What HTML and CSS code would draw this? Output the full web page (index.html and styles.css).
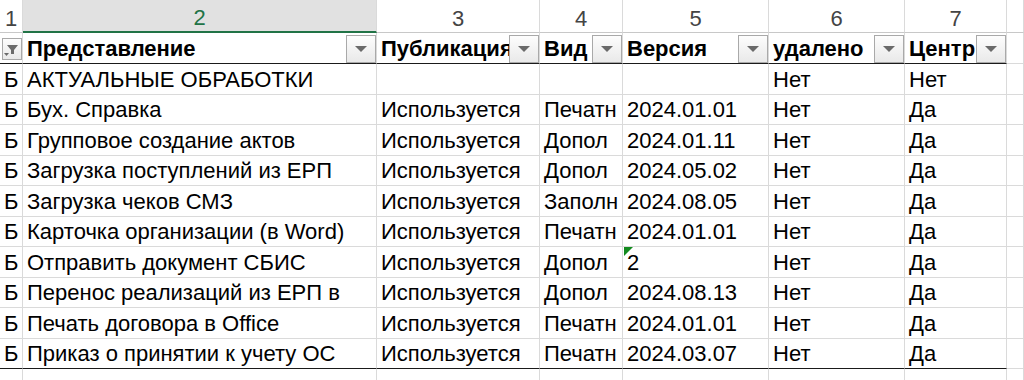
FILE: index.html
```html
<!DOCTYPE html>
<html lang="ru">
<head>
<meta charset="utf-8">
<title>Лист</title>
<link rel="stylesheet" href="styles.css">
</head>
<body>
<div class="sheet">
  <div class="ch">1</div>
  <div class="ch sel">2</div>
  <div class="ch">3</div>
  <div class="ch">4</div>
  <div class="ch">5</div>
  <div class="ch">6</div>
  <div class="ch">7</div>
  <div class="ch"></div>

  <div class="th first">
    <span class="fbtn active">
      <svg width="18" height="18" viewBox="0 0 18 18">
        <path d="M4 5 H15 L11 10 V14 H8 V10 Z" fill="#6b6b6b"/>
        <path d="M1 13 H6 L3.5 16 Z" fill="#6b6b6b"/>
      </svg>
    </span>
  </div>
  <div class="th"><span class="lbl">Представление</span><span class="fbtn"><i></i></span></div>
  <div class="th"><span class="lbl">Публикация</span><span class="fbtn"><i></i></span></div>
  <div class="th"><span class="lbl">Вид</span><span class="fbtn"><i></i></span></div>
  <div class="th"><span class="lbl">Версия</span><span class="fbtn"><i></i></span></div>
  <div class="th"><span class="lbl">удалено</span><span class="fbtn"><i></i></span></div>
  <div class="th"><span class="lbl">Центр</span><span class="fbtn"><i></i></span></div>
  <div class="c plain"></div>

  <div class="c">Б</div><div class="c">АКТУАЛЬНЫЕ ОБРАБОТКИ</div><div class="c"></div><div class="c"></div><div class="c"></div><div class="c">Нет</div><div class="c">Нет</div><div class="c plain"></div>
  <div class="c">Б</div><div class="c">Бух. Справка</div><div class="c">Используется</div><div class="c">Печатн</div><div class="c">2024.01.01</div><div class="c">Нет</div><div class="c">Да</div><div class="c plain"></div>
  <div class="c">Б</div><div class="c">Групповое создание актов</div><div class="c">Используется</div><div class="c">Допол</div><div class="c">2024.01.11</div><div class="c">Нет</div><div class="c">Да</div><div class="c plain"></div>
  <div class="c">Б</div><div class="c">Загрузка поступлений из ЕРП</div><div class="c">Используется</div><div class="c">Допол</div><div class="c">2024.05.02</div><div class="c">Нет</div><div class="c">Да</div><div class="c plain"></div>
  <div class="c">Б</div><div class="c">Загрузка чеков СМЗ</div><div class="c">Используется</div><div class="c">Заполн</div><div class="c">2024.08.05</div><div class="c">Нет</div><div class="c">Да</div><div class="c plain"></div>
  <div class="c">Б</div><div class="c">Карточка организации (в Word)</div><div class="c">Используется</div><div class="c">Печатн</div><div class="c">2024.01.01</div><div class="c">Нет</div><div class="c">Да</div><div class="c plain"></div>
  <div class="c">Б</div><div class="c">Отправить документ СБИС</div><div class="c">Используется</div><div class="c">Допол</div><div class="c err">2</div><div class="c">Нет</div><div class="c">Да</div><div class="c plain"></div>
  <div class="c">Б</div><div class="c">Перенос реализаций из ЕРП в</div><div class="c">Используется</div><div class="c">Допол</div><div class="c">2024.08.13</div><div class="c">Нет</div><div class="c">Да</div><div class="c plain"></div>
  <div class="c">Б</div><div class="c">Печать договора в Office</div><div class="c">Используется</div><div class="c">Печатн</div><div class="c">2024.01.01</div><div class="c">Нет</div><div class="c">Да</div><div class="c plain"></div>
  <div class="c last">Б</div><div class="c last">Приказ о принятии к учету ОС</div><div class="c last">Используется</div><div class="c last">Печатн</div><div class="c last">2024.03.07</div><div class="c last">Нет</div><div class="c last">Да</div><div class="c plain"></div>

  <div class="c"></div><div class="c"></div><div class="c"></div><div class="c"></div><div class="c"></div><div class="c"></div><div class="c"></div><div class="c plain"></div>
</div>
</body>
</html>
```

FILE: styles.css
```css
* { box-sizing: border-box; }
html, body { margin: 0; padding: 0; background: #fff; }
body {
  font-family: "Liberation Sans", Arial, sans-serif;
  font-size: 22px;
  color: #000;
  overflow: hidden;
}
.sheet {
  display: grid;
  grid-template-columns: 23px 354px 163px 83px 146px 136px 102px 17px;
  grid-template-rows: 33px 31px repeat(10, 30.5px) 30px;
  width: 1024px;
}
.ch {
  display: flex;
  align-items: flex-end;
  justify-content: center;
  padding-bottom: 0;
  font-size: 22px;
  color: #444;
  border-right: 1px solid #dadada;
  border-bottom: 1px solid #c8c8c8;
  background: #fff;
}
.ch.sel {
  background: #e1e1e1;
  color: #217346;
  border-bottom: 2px solid #217346;
}
.th {
  position: relative;
  display: flex;
  align-items: center;
  padding-left: 4px;
  padding-top: 1px;
  font-weight: bold;
  white-space: nowrap;
  overflow: hidden;
  border-right: 1px solid #dadada;
  border-bottom: 1.5px solid #1a1a1a;
}
.th.first { padding-left: 0; }
.fbtn {
  position: absolute;
  right: 0;
  top: 2px;
  width: 30px;
  height: 28px;
  border: 1px solid #a9a9a9;
  background: linear-gradient(#fdfdfd, #e9e9e9);
  display: flex;
  align-items: center;
  justify-content: center;
}
.fbtn i {
  width: 0;
  height: 0;
  border-left: 6px solid transparent;
  border-right: 6px solid transparent;
  border-top: 6px solid #6a6a6a;
}
.fbtn.active {
  left: 2px;
  right: auto;
  top: 5px;
  width: 20px;
  height: 22px;
}
.c {
  position: relative;
  display: flex;
  align-items: center;
  padding-left: 4px;
  padding-top: 2px;
  white-space: nowrap;
  overflow: hidden;
  border-right: 1px solid #dadada;
  border-bottom: 1px solid #dadada;
}
.c.last { border-bottom: 1.5px solid #1a1a1a; }
.c.plain { border-bottom: 1px solid #dadada; }
.c.err::before {
  content: "";
  position: absolute;
  left: 1px;
  top: 0;
  border-top: 9px solid #128a1e;
  border-right: 9px solid transparent;
}
```
